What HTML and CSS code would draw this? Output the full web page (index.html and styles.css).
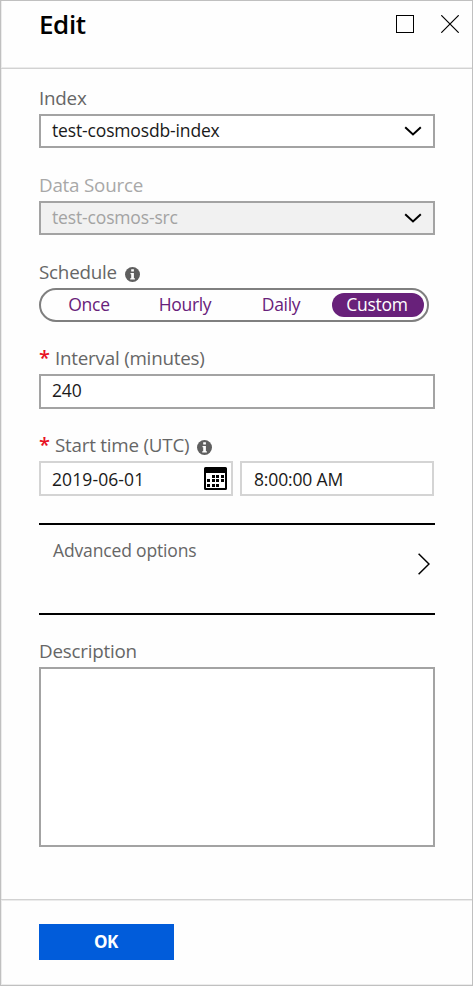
FILE: index.html
```html
<!DOCTYPE html>
<html lang="en">
<head>
<meta charset="utf-8">
<title>Edit</title>
<link rel="stylesheet" href="styles.css">
</head>
<body>
<main class="blade">
  <header class="header">
    <h1 class="title">Edit</h1>
    <div class="window-actions">
      <svg class="maximize" width="18" height="18" viewBox="0 0 18 18"><rect x=".5" y=".5" width="17" height="17"/></svg>
      <svg class="close" width="18" height="18" viewBox="0 0 18 18"><path d="M.3.3l17.4 17.4M17.7.3L.3 17.7"/></svg>
    </div>
  </header>
  <form class="form">
    <div class="field">
      <div class="label"><span>Index</span></div>
      <div class="box"><span class="value">test-cosmosdb-index</span>
        <svg class="chevron" width="18" height="10" viewBox="0 0 18 10"><path d="M1.200 1.200L9 8.400l7.800-7.200"/></svg>
      </div>
    </div>
    <div class="field disabled">
      <div class="label"><span>Data Source</span></div>
      <div class="box"><span class="value">test-cosmos-src</span>
        <svg class="chevron" width="18" height="10" viewBox="0 0 18 10"><path d="M1.200 1.200L9 8.400l7.800-7.200"/></svg>
      </div>
    </div>
    <div class="field schedule">
      <div class="label"><span>Schedule</span>
        <svg class="info" width="15" height="15" viewBox="0 0 15 15"><circle cx="7.500" cy="7.500" r="7.500"/><path d="M6.200 2.300h2.700v2.200H6.200zM5.500 6h3.400v5.300h1v1.200H5.200v-1.200h1V7.200h-.7z"/></svg>
      </div>
      <div class="segments">
        <span class="segment">Once</span>
        <span class="segment">Hourly</span>
        <span class="segment">Daily</span>
        <span class="segment selected">Custom</span>
      </div>
    </div>
    <div class="field">
      <div class="label"><span class="required">*</span><span>Interval (minutes)</span></div>
      <div class="box tall"><span class="value number">240</span></div>
    </div>
    <div class="field">
      <div class="label"><span class="required">*</span><span>Start time (UTC)</span>
        <svg class="info" width="15" height="15" viewBox="0 0 15 15"><circle cx="7.500" cy="7.500" r="7.500"/><path d="M6.200 2.300h2.700v2.200H6.200zM5.500 6h3.400v5.300h1v1.200H5.200v-1.200h1V7.200h-.7z"/></svg>
      </div>
      <div class="datetime">
        <div class="box tall light date"><span class="digits">2019-06-01</span>
          <svg class="calendar" width="23" height="23" viewBox="0 0 23 23"><rect class="sheet" x="1" y="1" width="21" height="21" rx=".5"/><path d="M1 1h21v5H1z"/><path d="M8 8h3v3H8zM12 8h3v3h-3zM17 8h3v3h-3zM3 12h3v3H3zM8 12h3v3H8zM12 12h3v3h-3zM17 12h3v3h-3zM3 17h3v3H3zM8 17h3v3H8zM12 17h3v3h-3z"/></svg>
        </div>
        <div class="box tall light time"><span class="clock">8:00:00 AM</span></div>
      </div>
    </div>
    <div class="advanced">
      <span>Advanced options</span>
      <svg class="arrow" width="12" height="22" viewBox="0 0 12 22"><path d="M.6.700L11 11 .6 21.300"/></svg>
    </div>
    <div class="field">
      <div class="label"><span>Description</span></div>
      <div class="textarea"></div>
    </div>
  </form>
  <footer class="footer"><button class="ok" type="button">OK</button></footer>
</main>
</body>
</html>
```
FILE: styles.css
```css
* { box-sizing: border-box; }
body { margin: 0; background: #fff; }
.blade {
  display: flex;
  flex-direction: column;
  width: 473px;
  height: 986px;
  border: 1px solid #c0c0c0;
  background: #fefefe;
  box-shadow: inset 1px -1px 0 #ececec;
  font-family: "Open Sans", "Noto Sans", sans-serif;
  font-size: 17.5px;
  letter-spacing: -.15px;
  color: #1a1a1a;
  white-space: nowrap;
}
.header {
  display: flex;
  justify-content: space-between;
  height: 68px;
  padding: 0 13px 0 38px;
  border-bottom: 1px solid #d2d2d2;
  box-shadow: inset 0 -1px 0 #ebebeb;
}
.title { margin: 6px 0 0; font-size: 26px; line-height: 34px; font-weight: 600; color: #000; letter-spacing: -.4px; }
.window-actions { display: flex; gap: 27px; padding-top: 14px; }
svg { display: block; flex: none; fill: none; stroke: #000; }
.close { stroke-width: 1.2; }
.form { flex: 1; padding: 17px 37px 0 38px; }
.field { height: 87px; }
.schedule { height: 86px; }
.label { display: flex; align-items: flex-start; height: 28px; line-height: 24px; font-size: 18.8px; letter-spacing: -.22px; color: #666; }
.box {
  display: flex;
  align-items: center;
  justify-content: space-between;
  height: 34px;
  padding: 0 11px;
  border: 2px solid #a3a3a3;
  background: #fff;
}
.value { padding-bottom: 2px; }
.number { padding-bottom: 3px; }
.digits { letter-spacing: .1px; }
.clock { padding-left: 1px; }
.tall { height: 35px; }
.light { border-color: #d4d4d4; }
.disabled .label { color: #a8a8a8; }
.disabled .box { background: #f1f1f1; color: #a3a3a3; }
.chevron { stroke-width: 2; }
.info { margin: 7px 0 0 8px; fill: #5f5f5f; stroke: none; }
.info path { fill: #fff; }
.required { width: 16px; color: #e81123; font-size: 20px; font-weight: 600; }
.segments {
  display: grid;
  grid-template-columns: 96px 96px 96px 92px;
  align-items: center;
  width: 390px;
  height: 34px;
  border: 2px solid #7f7f7f;
  border-radius: 17px;
  color: #68217a;
}
.segment { display: flex; align-items: center; justify-content: center; height: 24px; padding-bottom: 2px; letter-spacing: -.3px; }
.selected { margin: 0 -3px 0 3px; padding-right: 2px; border-radius: 12px; background: #68217a; color: #fff; }
.datetime { display: flex; gap: 7px; }
.date { width: 194px; padding-right: 4px; }
.time { width: 194px; }
.calendar { fill: #000; stroke: none; }
.calendar .sheet { fill: #fff; stroke: #000; stroke-width: 2; }
.advanced {
  display: flex;
  justify-content: space-between;
  width: 396px;
  height: 92px;
  margin: 3px 0 24px;
  padding: 13px 5px 0 14px;
  border: solid #000;
  border-width: 2px 0;
  line-height: 24px;
  color: #666;
}
.arrow { margin-top: 15px; stroke-width: 1.5; }
.textarea { height: 180px; border: 2px solid #a3a3a3; background: #fff; }
.footer { height: 86px; padding: 24px 38px; border-top: 1px solid #d2d2d2; box-shadow: inset 0 1px 0 #ebebeb; }
.ok { display: block; width: 135px; height: 36px; padding: 0 1px 0 0; border: 0; background: #015cda; color: #fff; font: 700 17px/36px "Open Sans", sans-serif; letter-spacing: -.3px; }
```
